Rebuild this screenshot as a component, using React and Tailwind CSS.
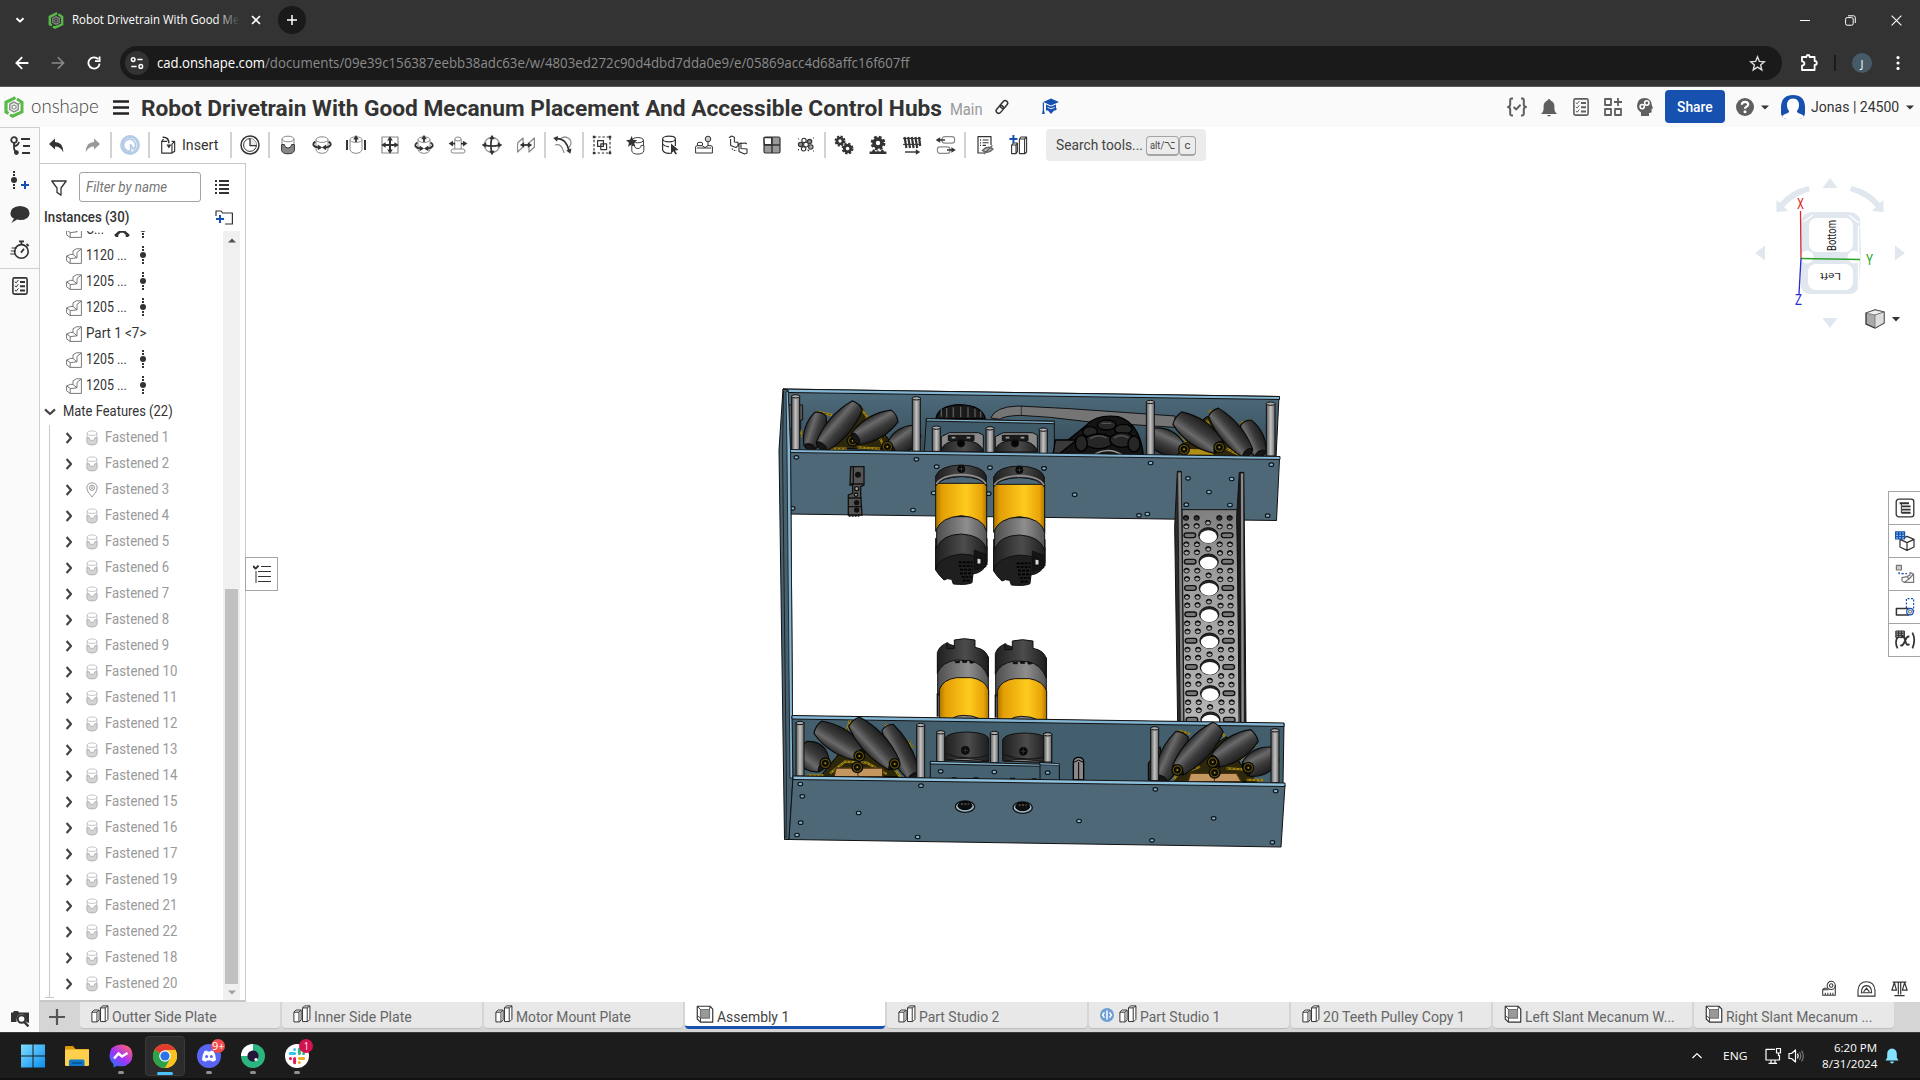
import React, { useLayoutEffect, useRef, useState } from "react";

// Single line of text squeezed or stretched to a given width.
function Fit({ w, className = "", children }) {
  const ref = useRef(null);
  const [s, setS] = useState(1);
  useLayoutEffect(() => {
    const n = ref.current.offsetWidth;
    if (n) setS(w / n);
  }, [w, children]);
  return (
    <span className="block shrink-0" style={{ width: w }}>
      <span ref={ref} className={"inline-block origin-left whitespace-pre align-top " + className} style={{ transform: `scaleX(${s})` }}>
        {children}
      </span>
    </span>
  );
}

function Ic({ size = "size-5", className = "", children, box = "0 0 20 20" }) {
  return (
    <svg viewBox={box} className={`${size} shrink-0 ${className}`} fill="none" stroke="#333" strokeWidth="1.2" strokeLinejoin="round">
      {children}
    </svg>
  );
}

const DARK = "#333";

/* ---------- browser chrome ---------- */

const Hex = ({ size }) => (
  <svg viewBox="0 0 20 22" className={`${size} shrink-0`} fill="none">
    <path d="M11.5 1.6 L2 6.2 V16 L4.6 17.4" stroke="#59b947" strokeWidth="3.2" />
    <path d="M13 3 L18 6.2 V15.8 L8.6 20.2 L6 18.8" stroke="#59b947" strokeWidth="3" />
    <path d="M10 6 L5.8 8.3 V13.6 L10 16 L14.2 13.6 V8.3 Z" stroke="#8b8f8b" strokeWidth="1.5" />
    <path d="M10 9 L8 10.2 V12.2 L10 13.2 L12 12.2 V10 Z M14 8.4 L16 7.2" stroke="#8b8f8b" strokeWidth="1.2" />
  </svg>
);

function Chrome() {
  return (
    <div className="h-[87px] shrink-0 border-b border-[#5c5c5c] bg-[#333333] font-['Open_Sans',sans-serif] text-white">
      <div className="flex h-10 items-center">
        <div className="flex w-10 justify-center">
          <Ic size="size-3" box="0 0 12 12"><path d="M2.5 4.2 L6 7.6 L9.5 4.2" stroke="#fff" strokeWidth="2" /></Ic>
        </div>
        <div className="ml-2 flex w-4 justify-center rounded-sm"><Hex size="h-[17px] w-4" /></div>
        <div className="relative ml-2 w-[168px] overflow-hidden text-[12px] leading-5">
          <Fit w={167}>Robot Drivetrain With Good Me</Fit>
          <div className="absolute inset-y-0 right-0 w-6 bg-linear-to-r from-transparent to-[#333333]" />
        </div>
        <Ic size="size-3" className="ml-[10px]" box="0 0 12 12"><path d="M2 2 L10 10 M10 2 L2 10" stroke="#fff" strokeWidth="1.6" /></Ic>
        <div className="ml-[16px] flex size-7 items-center justify-center rounded-full bg-[#1a1a1a]">
          <Ic size="size-3" box="0 0 12 12"><path d="M6 1 V11 M1 6 H11" stroke="#fff" strokeWidth="1.5" /></Ic>
        </div>
        <div className="flex-1" />
        <div className="flex w-[120px] items-center justify-between pr-[18px]">
          <Ic size="size-[10px]" box="0 0 10 10"><path d="M0 5.5 H10" stroke="#fff" strokeWidth="1" /></Ic>
          <Ic size="size-[11px]" box="0 0 11 11"><rect x="0.6" y="2.6" width="7.6" height="7.6" rx="1.6" stroke="#fff" strokeWidth="1" /><path d="M3 .8 H8.6 Q10.3 .8 10.3 2.6 V8" stroke="#fff" strokeWidth="1" /></Ic>
          <Ic size="size-[11px]" box="0 0 11 11"><path d="M.6 .6 L10.4 10.4 M10.4 .6 L.6 10.4" stroke="#fff" strokeWidth="1.1" /></Ic>
        </div>
      </div>
      <div className="flex h-[46px] items-center">
        <div className="flex w-[120px] items-center gap-[22px] pl-[15px]">
          <Ic size="size-[14px]" box="0 0 14 14"><path d="M13.4 7 H1.6 M7.2 1.2 L1.4 7 L7.2 12.8" stroke="#fff" strokeWidth="1.8" strokeLinejoin="miter" /></Ic>
          <Ic size="size-[14px]" box="0 0 14 14"><path d="M.6 7 H12.4 M6.8 1.2 L12.6 7 L6.8 12.8" stroke="#8a8a8a" strokeWidth="1.6" strokeLinejoin="miter" /></Ic>
          <Ic size="size-[14px]" box="0 0 14 14"><path d="M12.6 7.6 A5.6 5.6 0 1 1 11.2 3.2 M12.6 .6 V5.2 H8" stroke="#fff" strokeWidth="1.8" strokeLinejoin="miter" /></Ic>
        </div>
        <div className="flex h-[34px] w-[1662px] items-center rounded-full bg-[#1a1a1a] pl-[5px] pr-4">
          <div className="flex size-6 items-center justify-center rounded-full bg-[#333333]">
            <Ic size="size-[14px]" box="0 0 14 14"><g stroke="#fff" strokeWidth="1.5"><circle cx="3.2" cy="3.6" r="1.8" /><path d="M7.4 3.6 H12.6 M1.2 10.4 H6.6" /><circle cx="10.8" cy="10.4" r="1.8" /></g></Ic>
          </div>
          <div className="ml-2 flex text-[14px] leading-5">
            <Fit w={108}>cad.onshape.com</Fit>
            <Fit w={644} className="text-[#8b8b8b]">/documents/09e39c156387eebb38adc63e/w/4803ed272c90d4dbd7dda0e9/e/05869acc4d68affc16f607ff</Fit>
          </div>
          <div className="flex-1" />
          <Ic size="size-[17px]" box="0 0 17 17"><path d="M8.5 1.8 L10.4 6.4 L15.4 6.8 L11.6 10 L12.8 14.9 L8.5 12.2 L4.2 14.9 L5.4 10 L1.6 6.8 L6.6 6.4 Z" stroke="#ddd" strokeWidth="1.4" strokeLinejoin="miter" /></Ic>
        </div>
        <Ic size="size-[18px]" className="ml-[18px]" box="0 0 18 18"><path d="M2 3 H6.4 Q6.4 1 8 1 Q9.6 1 9.6 3 H14.6 V7 Q16.8 7 16.8 9 Q16.8 11 14.6 11 V16 H2 V11.6 Q4.4 11.4 4.4 9.5 Q4.4 7.6 2 7.4 Z" stroke="#fff" strokeWidth="1.8" /></Ic>
        <div className="ml-[16px] h-4 w-[2px] bg-[#1c1c1c]" />
        <div className="ml-[16px] flex size-5 items-center justify-center rounded-full bg-[#465b67] text-[11px] leading-none">J</div>
        <Ic size="size-4" className="ml-[18px]" box="0 0 16 16"><g fill="#fff" stroke="none"><circle cx="8" cy="2.6" r="1.6" /><circle cx="8" cy="8" r="1.6" /><circle cx="8" cy="13.4" r="1.6" /></g></Ic>
      </div>
    </div>
  );
}

/* ---------- document header ---------- */

const Caret = ({ className = "" }) => (
  <svg viewBox="0 0 8 5" className={`h-[5px] w-2 shrink-0 ${className}`}><path d="M0 .4 H8 L4 4.6 Z" fill="#333" /></svg>
);

function Header() {
  const g = "#5f5f5f";
  return (
    <div className="flex h-10 shrink-0 items-center bg-[#fafafa] pl-[4px]">
      <Hex size="h-[22px] w-5" />
      <div className="ml-[7px] mt-[-4px] font-['Lato',sans-serif] text-[20px] font-light leading-6 text-[#444]"><Fit w={68}>onshape</Fit></div>
      <Ic size="h-[15px] w-4" className="ml-[14px]" box="0 0 16 15"><path d="M0 1.5 H16 M0 7.5 H16 M0 13.5 H16" stroke="#222" strokeWidth="2.6" /></Ic>
      <div className="ml-[12px] mt-[2px] text-[22.5px] font-bold leading-7 text-[#333]"><Fit w={801}>Robot Drivetrain With Good Mecanum Placement And Accessible Control Hubs</Fit></div>
      <div className="ml-[8px] mt-[6px] text-[16.5px] leading-6 text-[#999]"><Fit w={33}>Main</Fit></div>
      <Ic size="size-4" className="ml-[11px]" box="0 0 16 16"><g strokeWidth="1.5" transform="rotate(-50 8 8)"><rect x=".5" y="5.4" width="8.6" height="5" rx="2.5" /><rect x="6.9" y="5.4" width="8.6" height="5" rx="2.5" /></g></Ic>
      <Ic size="size-[17px]" className="ml-[32px] mt-[-2px]" box="0 0 17 17"><g fill="#1651b0" stroke="none"><path d="M9 .6 L17 4 L9 7.6 L1.2 4 Z" /><path d="M4 6.4 L9 8.6 L14 6.4 V10 L15 11 L13.4 12.4 H12 L9 16 L6 12.4 H4 Z" /><path d="M.8 4.4 H2 V12 L2.8 16 H0 L.8 12 Z" /><path d="M5.600 9.400 L9 10.800 L12.600 9.400" fill="none" stroke="#fafafa" strokeWidth=".9" /></g></Ic>
      <div className="flex-1" />
      <div className="flex items-center">
        <Ic size="size-5" className="mr-[14px]"><path d="M6 1.6 H4.6 Q3.2 1.6 3.2 3 V7.6 Q3.2 9.6 1 10 Q3.2 10.4 3.2 12.4 V17 Q3.2 18.4 4.6 18.4 H6 M14 1.6 H15.4 Q16.8 1.6 16.8 3 V7.6 Q16.8 9.6 19 10 Q16.8 10.4 16.8 12.4 V17 Q16.8 18.4 15.4 18.4 H14" stroke={g} strokeWidth="2" /><path d="M6.6 10 L9.2 12.4 L13.6 7.8" stroke={g} strokeWidth="2" /></Ic>
        <Ic size="h-[19px] w-4" className="mr-[16px]" box="0 0 16 19"><path d="M8 1 Q9.4 1 9.6 2.6 Q13.4 4 13.4 8.4 V11.6 Q13.6 14 16 16 H0 Q2.4 14 2.6 11.6 V8.4 Q2.6 4 6.4 2.6 Q6.6 1 8 1 Z M6 17 H10 Q9.4 18.4 8 18.4 Q6.6 18.4 6 17 Z" fill={g} stroke="none" /></Ic>
        <Ic size="h-[18px] w-4" className="mr-[15px]" box="0 0 16 18"><Checklist c={g} /></Ic>
        <Ic size="size-[18px]" className="mr-[15px]" box="0 0 18 18"><path d="M1 1 H7 V7 H1 Z M1 11 H7 V17 H1 Z M11 11 H17 V17 H11 Z M14 0 V8 M10 4 H18" stroke={g} strokeWidth="1.8" /></Ic>
        <Ic size="h-[18px] w-4" className="mr-[12px]" box="0 0 16 18"><path d="M7.6 0 Q14.6 .4 14.8 7 L16 10.2 L14.6 11 V14.4 L12 15 V18 H4 V14.6 Q0 12 0 7.6 Q.4 .4 7.6 0 Z" fill={g} stroke="none" /><circle cx="9.8" cy="5" r="2.200" stroke="#fff" strokeWidth="1.5" /><circle cx="5.2" cy="8.6" r="2.1" stroke="#fff" strokeWidth="1.5" /></Ic>
      </div>
      <div className="mt-[-1px] flex h-[33px] w-[60px] items-center justify-center rounded bg-[#1651b0] text-[15px] leading-5 text-white"><Fit w={36} className="font-medium">Share</Fit></div>
      <Ic size="size-[18px]" className="ml-[11px]" box="0 0 18 18"><circle cx="9" cy="9" r="9" fill={g} stroke="none" /><path d="M5.8 6.8 Q6 3.8 9 3.8 Q12.2 4 12.2 6.6 Q12.2 8 10.4 8.8 Q9 9.4 9 10.8" stroke="#fff" strokeWidth="2.2" /><circle cx="9" cy="13.8" r="1.5" fill="#fff" stroke="none" /></Ic>
      <Caret className="ml-[7px]" />
      <div className="ml-[12px] size-6 overflow-hidden rounded-md">
        <svg viewBox="0 0 24 24" className="size-6"><path d="M0 24 V11 Q1 0 12 0 Q23 0 24 11 V24 Z" fill="#1651b0" /><path d="M12 3.6 Q18.4 4 18 11 Q17.6 15 15.8 16 Q16 18 19 18.8 Q23 19.6 24 24 H0 Q1 19.6 5 18.8 Q8 18 8.2 16 Q6.4 15 6 11 Q5.6 4 12 3.6 Z" fill="#fff" /></svg>
      </div>
      <div className="ml-[6px] mt-[-1px] text-[15px] leading-5 text-[#333]"><Fit w={88}>Jonas | 24500</Fit></div>
      <Caret className="ml-[7px] mr-[6px]" />
    </div>
  );
}

function Checklist({ c = DARK }) {
  return (
    <g stroke={c} fill="none">
      <rect x=".9" y=".9" width="14.2" height="16.2" rx="1.6" strokeWidth="1.6" />
      <path d="M8 5 H13 M8 9.2 H13 M8 13.4 H13" strokeWidth="2" />
      <path d="M2.8 4.6 L4.2 5.8 L6.4 3 M2.8 8.8 L4.2 10 L6.4 7.2 M2.8 13 L4.2 14.2 L6.4 11.4" strokeWidth="1" />
    </g>
  );
}

/* ---------- toolbar ---------- */

const L = "#8a8a8a";
const Cyl = () => (<g stroke={L} strokeWidth="1"><ellipse cx="10" cy="4.6" rx="6" ry="2.8" fill="#fff" /><path d="M4 4.6 V15 Q5 18.400 10 18.400 Q15 18.400 16 15 V4.6" /></g>);
const Cup = ({ c = "#333", f = "#888", l = L }) => (
  <g strokeWidth="1">
    <ellipse cx="10" cy="4" rx="6" ry="2.8" stroke={l} />
    <path d="M4 4 V10 M16 4 V10" stroke={l} />
    <path d="M3.6 9.6 H6.4 Q6.8 12 8 12.4 Q10 13.6 12 12.4 Q13.2 12 13.6 9.6 H16.4 V15.4 Q15.6 18.8 10 18.8 Q4.4 18.8 3.6 15.4 Z" fill={f} stroke={c} />
  </g>
);
const Tri = ({ x, y, r = 0 }) => <path transform={`translate(${x} ${y}) rotate(${r})`} d="M0 -2.8 L2.8 1.6 H-2.8 Z" fill={DARK} stroke="none" />;
const Gear = ({ x, y, r }) => (
  <g transform={`translate(${x} ${y})`}><circle r={r} strokeWidth={r * 0.9} /><circle r={r * 1.55} strokeWidth={r * 0.6} strokeDasharray={`${r * 0.7} ${r * 0.52}`} /></g>
);
const Boxes = () => (
  <g strokeWidth="1.1">
    <path d="M1 8 L3.400 5.600 H9 V16.6 L7 18.800 H1 Z M1 8 H6.600 L9 5.600 M6.600 8 V18.800" fill="#fff" />
    <path d="M10.600 3.200 L12.800 1 H18.800 V16 L16.400 18.400 H10.600 Z M10.600 3.200 H15.800 L18.800 1 M15.800 3.200 V18" fill="#fff" />
  </g>
);

const icons = {
  undo: <path d="M2 9 L8 3.6 V7 Q16 7 16.4 17.4 Q13.6 11.6 8 11.6 V14.6 Z" fill="#333" stroke="none" />,
  redo: <path d="M18 9 L12 3.6 V7 Q4 7 3.6 17.4 Q6.4 11.6 12 11.6 V14.6 Z" fill="#999" stroke="none" />,
  clock: <g><circle cx="10" cy="10" r="9" strokeWidth="1.5" /><circle cx="10" cy="10" r="6.4" strokeWidth="1" /><path d="M10 3.6 A6.4 6.4 0 0 1 16.4 10 H10 Z" fill="#e6e6e6" stroke="none" /><path d="M10 3.6 V10.6 H16.4" strokeWidth="1.3" /></g>,
  fasten: <Cup />,
  revolute: <g><Cyl /><path d="M3.400 6.600 Q.8 8 1.400 10 Q2.400 12 6 12.400 M16.600 6.600 Q19.200 8 18.600 10 Q17.600 12 14 12.400" strokeWidth="1.8" /><Tri x="7.4" y="12.4" r={90} /><Tri x="12.6" y="12.4" r={-90} /></g>,
  slider: <g><Cyl /><path d="M1 5 V15 M19 5 V15" strokeWidth="2" /><path d="M10 7 V3" strokeWidth="1.8" /><Tri x="10" y="2.8" /></g>,
  planar: <g><rect x="2" y="2" width="16" height="16" stroke={L} /><path d="M10 4 V16 M4 10 H16" strokeWidth="2" /><Tri x="10" y="4" /><Tri x="10" y="16" r={180} /><Tri x="4" y="10" r={-90} /><Tri x="16" y="10" r={90} /></g>,
  cylindrical: <g><Cyl /><path d="M3.400 7.400 Q.8 9 1.400 11 Q2.400 13 6 13.400 M16.600 7.400 Q19.200 9 18.600 11 Q17.600 13 14 13.400 M10 7 V3" strokeWidth="1.8" /><Tri x="10" y="2.6" /><Tri x="7.2" y="13.4" r={90} /><Tri x="12.8" y="13.4" r={-90} /></g>,
  pinslot: <g stroke={L} strokeWidth="1"><ellipse cx="10" cy="4" rx="3.2" ry="2" /><path d="M6.800 4 V14 M13.200 4 V14" /><rect x="3" y="14" width="14" height="4" rx="2" /><path d="M4 8.600 H7 M13 8.600 H16" stroke={DARK} strokeWidth="1.8" /><Tri x="3.4" y="8.6" r={-90} /><Tri x="16.6" y="8.6" r={90} /></g>,
  ball: <g><circle cx="10" cy="10" r="7.6" stroke={L} /><path d="M10 2.400 Q7.600 10 10 17.600 M2.400 10 Q10 12.400 17.600 10" strokeWidth="1.7" /><Tri x="10" y="2.6" /><Tri x="10" y="17.4" r={180} /><Tri x="2.6" y="10" r={-90} /><Tri x="17.4" y="10" r={90} /></g>,
  parallel: <g><path d="M1.600 17 V8 L7 3 V12 Z M13 17 V8 L18.400 3 V12 Z" stroke={L} /><path d="M7 10 H13" strokeWidth="1.8" /><Tri x="6.6" y="10" r={-90} /><Tri x="13.4" y="10" r={90} /></g>,
  tangent: <g><path d="M2 10 Q9 8 11 18 M6.500 4.500 Q12 -.5 17 4.500 Q19.500 8.500 16 12.500" stroke={L} /><path d="M3.600 3.600 Q9 3.600 12 7 Q14.600 10 15.800 15" strokeWidth="1.8" /><Tri x="3" y="3.6" r={-80} /><Tri x="16.4" y="16" r={160} /></g>,
  group: <g><rect x="2" y="2" width="16" height="16" strokeDasharray="2.4 1.8" /><path d="M.8 .8 H3.200 V3.200 H.8 Z M16.800 .8 H19.200 V3.200 H16.800 Z M.8 16.800 H3.200 V19.200 H.8 Z M16.800 16.800 H19.200 V19.200 H16.800 Z" fill="#333" stroke="none" /><path d="M5.600 5.600 H11.400 V11.400 H5.600 Z M8.800 8.800 H14.600 V14.600 H8.800 Z" /></g>,
  mateconn: <g><g transform="translate(2.4 1.4) scale(.94)"><Cup f="#fff" l="#333" /></g><path d="M5.600 1 L7.200 4.800 L11.200 5.200 L8.200 7.800 L9.200 11.800 L5.600 9.600 L2 11.800 L3 7.800 L0 5.200 L4 4.800 Z" fill="#333" stroke="none" /></g>,
  select: <g><ellipse cx="9" cy="4" rx="6.4" ry="2.8" /><path d="M2.600 4 V15 Q4 18.400 9 18.400 Q11 18.400 12 18 M15.400 4 V11 M2.600 9 Q5 12 9 11.600" /><path d="M11 8.600 L18.600 15 L15 15.400 L17 18.800 L15.400 19.600 L13.600 16.200 L11 18.400 Z" fill="#333" stroke="none" /></g>,
  snap: <g strokeWidth="1"><path d="M1.600 12 Q1.600 10.600 4 10.600 H8 L11 12.600 L14 10.600 H16 Q18.400 10.600 18.400 12 V18 H1.600 Z M3 13 H17" /><ellipse cx="6" cy="9" rx="2.8" ry="1.8" fill="#fff" /><circle cx="14" cy="4" r="2.8" fill="#ccc" /><path d="M14 7 V11" /></g>,
  replicate: <g strokeWidth="1.1"><path d="M1 2.800 L3.600 1 L6.400 2.200 V7 L10 7.400 V10.600 L8 12.600 L2.600 10.600 V4 M11.600 8.600 L17.500 8 L18.800 9 M11 9 L13 8 V13.500 L19 14 V18 L16.500 19 L11 16.500 Z" /><path d="M4 13.400 Q5 15.600 8.600 15.600" strokeDasharray="1.600 1" /></g>,
  pattern: <g><rect x="2" y="2" width="16" height="16" rx="1.4" fill="#999" stroke={DARK} /><path d="M2 2.600 H9.600 V9.600 H2.400 Z" fill="#fff" /><path d="M10 2 V18 M2 10 H18" strokeWidth="1.4" /></g>,
  circular: <g strokeWidth="1.1"><circle cx="8" cy="5.4" r="2.2" /><circle cx="13.6" cy="6.6" r="2.2" fill="#888" /><circle cx="4.6" cy="9.4" r="2.2" fill="#888" /><circle cx="14.8" cy="12" r="2.2" fill="#aaa" /><circle cx="7.6" cy="13.8" r="2.2" /><circle cx="10" cy="9.600" r="2.4" fill="#fff" /><path d="M11.600 14.600 L13 16 M2 4 H3 M17 3 H18 M2 14.600 H3 M17 16 H18" /></g>,
  gears: <g><Gear x={6} y={6} r={3} /><Gear x={13.6} y={13.6} r={3.2} /></g>,
  rack: <g><Gear x={10} y={8} r={4} /><path d="M1.600 19 V16.400 H4 L5 14.600 H6.400 L7.400 16.400 H9.200 L10 15 L10.800 16.400 H12.600 L13.600 14.600 H15 L16 16.400 H18.400 V19 Z" fill="#333" stroke="none" /></g>,
  screw: <g><path d="M1 3.400 H19 M1 9.400 H19" strokeWidth="1" /><path d="M2.600 2 L4.400 13 M6.200 2 L8 13 M9.800 2 L11.600 13 M13.400 2 L15.200 13 M17 2 L18.200 11" strokeWidth="2.2" /><path d="M3 17 H14" strokeWidth="1.4" /><Tri x="15.4" y="17" r={90} /></g>,
  linear: <g><rect x="6" y="1.6" width="12.6" height="6.6" rx="2.6" stroke={L} /><rect x="1.4" y="11.8" width="12.6" height="6.6" rx="2.6" stroke={L} /><path d="M3 5 H9 M11 15 H16" strokeWidth="1.7" /><Tri x="2.6" y="5" r={-90} /><Tri x="17" y="15" r={90} /></g>,
  hidelist: <g><path d="M9 18 H3 V1.600 H16 V10" /><path d="M7.600 5 H13.600 M7.600 7.800 H13.600 M7.600 10.400 H11" strokeWidth="1.1" /><path d="M5 5 H6 M5 7.800 H6 M5 10.400 H6" strokeWidth="1.3" /><path d="M7.400 15.400 Q12.600 10 18 14 Q13 19.600 7.400 15.400 Z M9 19 L17.400 10.600" stroke="#666" strokeWidth="1.4" fill="#bbb" /></g>,
  addparts: <g><path d="M3.600 10 L5.400 8 H9.400 V16.600 L8 18.600 H3.600 Z M3.600 10 H8 L9.400 8 M8 10 V18.600 M11.400 4 L13 2 H18.600 V17 L17 18.600 H11.400 Z M11.400 4 H16.600 V18 M16.600 4 L18.600 2" strokeWidth="1.1" /><path d="M5.400 0 V8 M1.400 4 H9.400" stroke="#1651b0" strokeWidth="2" /></g>,
};

const Tool = ({ n, w = "w-[34px]" }) => (
  <div className={`flex ${w} shrink-0 justify-center`}><Ic>{icons[n]}</Ic></div>
);
const Sep = ({ className = "" }) => <div className={`h-[26px] w-[2px] shrink-0 bg-[#d2d2d2] ${className}`} />;

function Toolbar() {
  return (
    <div className="flex h-9 shrink-0 items-center pr-4">
      <Tool n="undo" />
      <Tool n="redo" w="w-9" />
      <Sep />
      <div className="flex w-9 justify-center">
        <Ic><circle cx="10" cy="10" r="8.4" stroke="#b5cce6" strokeWidth="3" /><path d="M8 16 A6 6 0 1 1 13.600 14.600 L10.600 9.800 V16.400 Z" stroke="#b5cce6" strokeWidth="1.8" /></Ic>
      </div>
      <Sep />
      <div className="flex w-20 items-center pl-[9px]">
        <Ic size="size-[18px]" box="0 0 20 20"><path d="M9 6 H3 V19 H14.400 V9 M14 6 H17.400 V17 L14.400 19 M3 6 L5 3.600 M14.400 9 L17.400 6" strokeWidth="1.3" /><path d="M4 1.400 Q11 1 11 8" strokeWidth="1.8" /><Tri x="11" y="11" r={180} /></Ic>
        <div className="ml-[5px] text-[15px] leading-5 text-[#333]"><Fit w={36}>Insert</Fit></div>
      </div>
      <Sep />
      <Tool n="clock" w="w-9" />
      <Sep className="mr-px" />
      {["fasten", "revolute", "slider", "planar", "cylindrical", "pinslot", "ball", "parallel"].map((n) => <Tool key={n} n={n} />)}
      <Sep className="ml-px" />
      <Tool n="tangent" />
      <Sep className="ml-[2px] mr-px" />
      {["group", "mateconn", "select", "snap", "replicate", "pattern", "circular"].map((n) => <Tool key={n} n={n} />)}
      <Sep className="mx-px" />
      {["gears", "rack", "screw", "linear"].map((n) => <Tool key={n} n={n} />)}
      <Sep className="ml-px mr-[2px]" />
      <Tool n="hidelist" />
      <Tool n="addparts" w="w-[32px]" />
      <div className="ml-[12px] flex h-8 w-40 items-center rounded bg-[#ececec] pl-[10px] text-[15px] text-[#444]">
        <Fit w={87}>Search tools...</Fit>
        <div className="ml-[3px] mt-[2px] flex h-[20px] w-[33px] items-center justify-center rounded-sm border border-b-2 border-[#a5a5a5] text-[11.5px]"><Fit w={26}>alt/⌥</Fit></div>
        <div className="mt-[2px] flex h-[20px] w-[17px] items-center justify-center rounded-sm border border-b-2 border-[#a5a5a5] text-[11.5px]">c</div>
      </div>
    </div>
  );
}

/* ---------- left rail and instance panel ---------- */

const Dots = () => (
  <svg viewBox="0 0 6 18" className="h-[18px] w-[6px] shrink-0" fill="#333"><path d="M2 0 H4 V2 H2 Z M2 3 H4 V5 H2 Z M2 13 H4 V15 H2 Z M2 16 H4 V18 H2 Z" /><circle cx="3" cy="9" r="3" /></svg>
);

function Rail() {
  return (
    <div className="flex w-10 shrink-0 flex-col items-center border-r border-t border-[#cfcfcf] bg-[#fafafa]">
      <Ic size="size-5" className="mt-[8px]"><circle cx="4" cy="4" r="2.8" strokeWidth="1.8" /><path d="M4 7 V11 Q4 16 8 16.600 M4 10 Q8 10 9 6" strokeWidth="1.8" /><circle cx="6.4" cy="16.6" r="1.8" fill="#333" /><path d="M11 3 H20 M13 10 H20 M12 17 H20" strokeWidth="2.2" /></Ic>
      <div className="ml-[1px] mt-[15px] flex h-[20px] w-[18px]">
        <Dots />
        <Ic size="size-2" className="ml-[4px] mt-[10px]" box="0 0 8 8"><path d="M4 0 V8 M0 4 H8" stroke="#1651b0" strokeWidth="2" /></Ic>
      </div>
      <Ic size="h-[18px] w-5" className="mt-[15px]" box="0 0 20 18"><path d="M10 0 Q19.600 .6 19.600 7.400 Q19 14 10 14 Q8.400 14 7 13.600 L1.400 17 L4 12.600 Q.4 10.800 .4 7.400 Q.6 .6 10 0 Z" fill="#333" stroke="none" /></Ic>
      <Ic size="size-5" className="mt-[16px]"><circle cx="11.4" cy="11.4" r="6.8" strokeWidth="1.6" /><path d="M9 1.400 H14 M11.400 1.400 V4 M16.600 4 L18.600 6 M11 12.600 L14 8.800" strokeWidth="1.8" /><path d="M1.600 8 H7 M.8 11 H6 M.2 14 H5" strokeWidth="1.2" stroke="#333" /></Ic>
      <div className="mt-[8px] h-px w-full bg-[#cfcfcf]" />
      <Ic size="h-[18px] w-4" className="mt-[8px]" box="0 0 16 18"><Checklist /></Ic>
      <div className="flex-1" />
      <Ic size="size-[18px]" className="mb-[5px] ml-px" box="0 0 18 18"><path d="M0 3.400 H2 L3 2 H7 L8 3.400 H18 V14 L15 13 Q16 5.600 10.400 5 Q5 5.600 5.600 13 H0 Z" fill="#333" stroke="none" /><circle cx="10.6" cy="10" r="3.8" strokeWidth="2" stroke="#333" /><path d="M13.400 13.200 L17.400 17.400" strokeWidth="2.4" /></Ic>
    </div>
  );
}

const PartIcon = () => (
  <Ic size="size-4" box="0 0 16 16"><path d="M.6 8 L4.400 6.400 H7 V2.800 L10.400 .8 H15.400 V15.400 H4 L.6 12.800 Z M15.400 1 L11 4.400 V9.800 L4.400 10.600 L.6 8 M4.200 10.600 V15.400 M7 6.400 L11 9.800" stroke="#6a6a6a" strokeWidth=".9" /></Ic>
);

const instances = [
  { t: "1120 ...", w: 41, d: true },
  { t: "1205 ...", w: 41, d: true },
  { t: "1205 ...", w: 41, d: true },
  { t: "Part 1 <7>", w: 60 },
  { t: "1205 ...", w: 41, d: true },
  { t: "1205 ...", w: 41, d: true },
];
const mates = [1, 2, 3, 4, 5, 6, 7, 8, 9, 10, 11, 12, 13, 14, 15, 16, 17, 19, 21, 22, 18, 20];

function Panel() {
  return (
    <div className="flex h-[839px] w-[206px] shrink-0 flex-col border-b-2 border-r border-t border-[#c8c8c8] bg-white text-[#333]">
      <div className="flex h-[38px] items-end pl-[11px]">
        <Ic size="size-4" className="mb-[6px]" box="0 0 16 16"><path d="M.8 1 H15.200 L10 8 V15.200 L6 12.400 V8 Z" strokeWidth="1.3" /></Ic>
        <div className="ml-[12px] flex h-[30px] w-[122px] items-center rounded-[3px] border border-[#a3a3a3] pl-[6px] text-[14px] italic text-[#777]"><Fit w={81}>Filter by name</Fit></div>
        <Ic size="size-[14px]" className="mb-[8px] ml-[14px]" box="0 0 14 14"><path d="M0 1 H2 M4 1 H14 M0 5 H2 M4 5 H14 M0 9 H2 M4 9 H14 M0 13 H2 M4 13 H14" strokeWidth="2" /></Ic>
      </div>
      <div className="flex h-[29px] items-center pl-[4px] pt-[3px]">
        <div className="text-[14.5px] font-medium leading-5"><Fit w={85}>Instances (30)</Fit></div>
        <Ic size="h-[15px] w-[18px]" className="ml-[86px] mt-[-2px]" box="0 0 18 15"><path d="M1 6 V1 H6 L7.600 3 H17.400 V14 H10" strokeWidth="1.2" /><path d="M5 5 V13 M1 9 H9" stroke="#1651b0" strokeWidth="2" /></Ic>
      </div>
      <div className="flex h-[769px] pl-[2px]">
        <div className="w-[181px] overflow-hidden text-[14.5px]">
          <div className="mt-[-14px] flex h-[26px] items-center pl-6">
            <PartIcon /><span className="ml-1"><Fit w={18}>C...</Fit></span>
            <Ic size="size-4" className="ml-[10px]" box="0 0 16 16"><path d="M1 14 L6 9.500 H10 L15 14 M3 15 V11 M13 15 V11" strokeWidth="2.6" /></Ic>
            <span className="ml-[10px] mt-[-2px]"><Dots /></span>
          </div>
          {instances.map((r, i) => (
            <div key={i} className="flex h-[26px] items-center pl-6">
              <PartIcon />
              <span className="ml-1"><Fit w={r.w}>{r.t}</Fit></span>
              {r.d && <span className="ml-[13px] mt-[-2px]"><Dots /></span>}
            </div>
          ))}
          <div className="flex h-[26px] items-center pl-[2px]">
            <Ic size="h-2 w-3" box="0 0 12 8"><path d="M1 1.400 L6 6 L11 1.400" strokeWidth="2.2" stroke="#444" /></Ic>
            <span className="ml-[7px]"><Fit w={110}>Mate Features (22)</Fit></span>
          </div>
          <div className="ml-[7px] border-l border-[#c8c8c8]">
            {mates.map((m) => (
              <div key={m} className="flex h-[26px] items-center pl-[15px] text-[#999]">
                <Ic size="h-3 w-2" box="0 0 8 12"><path d="M1.600 1 L6 6 L1.600 11" strokeWidth="2.2" stroke="#444" /></Ic>
                <span className="ml-[11px] flex w-4 justify-center">
                  {m === 3 ? (
                    <Ic size="size-4" box="0 0 16 16"><path d="M8 15 Q2.800 9.600 2.800 6 Q3 1 8 .8 Q13 1 13.200 6 Q13.200 9.600 8 15 Z" stroke="#999" strokeWidth="1" /><circle cx="8" cy="5.8" r="2.6" stroke="#999" strokeWidth="1" /><circle cx="8" cy="5.8" r="1" stroke="#999" strokeWidth=".8" /></Ic>
                  ) : (
                    <Ic size="size-4" className="mt-[-1px]" box="0 0 20 20"><Cup c="#a6a6a6" f="#d4d4d4" l="#b8b8b8" /></Ic>
                  )}
                </span>
                <span className="ml-[5px]"><Fit w={m < 10 ? 64 : 72}>{"Fastened " + m}</Fit></span>
              </div>
            ))}
          </div>
          <div className="ml-[3px] h-px w-[9px] bg-[#c8c8c8]" />
        </div>
        <div className="flex w-[17px] flex-col items-center bg-[#f0f0f0]">
          <svg viewBox="0 0 8 5" className="mt-[7px] h-[5px] w-2 shrink-0"><path d="M0 4.600 H8 L4 .4 Z" fill="#505050" /></svg>
          <div className="mt-[346px] h-[395px] w-[13px] shrink-0 bg-[#c1c1c1]" />
          <svg viewBox="0 0 8 5" className="mt-[6px] h-[5px] w-2 shrink-0"><path d="M0 .4 H8 L4 4.600 Z" fill="#a0a0a0" /></svg>
        </div>
      </div>
    </div>
  );
}

/* ---------- 3D viewport ---------- */

const K = "#111";
const Post = ({ x, y, h, w = 24 }) => (
  <g><rect x={x} y={y} width={w} height={h} fill="url(#post)" stroke={K} strokeWidth="3" /><ellipse cx={x + w / 2} cy={y + 1} rx={w / 2} ry="5" fill="#aaa" stroke={K} strokeWidth="3" /></g>
);
const Bolt = ({ x, y, r = 7 }) => <ellipse cx={x} cy={y} rx={r} ry={r * 0.75} fill="#7fb3d3" stroke={K} strokeWidth="3.4" />;
const Roller = ({ x, y, a, l = 85, t = 28 }) => (
  <g transform={`translate(${x} ${y}) rotate(${a})`}>
    <path d={`M${-l} ${-t * 0.6} Q0 ${-t * 1.45} ${l} ${-t * 0.6} Q${l + 9} 0 ${l} ${t * 0.6} Q0 ${t * 1.45} ${-l} ${t * 0.6} Q${-l - 9} 0 ${-l} ${-t * 0.6} Z`} fill="url(#rub)" stroke="#0a0a0a" strokeWidth="3.4" />
    <ellipse cx={-l + 1} cy="0" rx="9" ry={t * 0.55} fill="#161616" stroke="#000" strokeWidth="2" />
  </g>
);
const Hub = ({ x, y }) => (<g><circle cx={x} cy={y} r="16" fill="#5e4e0b" stroke="#0a0a0a" strokeWidth="4" /><circle cx={x} cy={y} r="9" fill="#15130a" stroke="#000" strokeWidth="3" /><circle cx={x} cy={y} r="3" fill="#a58b12" /></g>);
// Dark wheel rim with a few bright bracket edges.
const Rim = ({ d, lines }) => (<g><path d={d} fill="#2d270c" stroke="#000" strokeWidth="3" /><path d={lines} stroke="#a98a10" strokeWidth="7" /><path d={lines} stroke="#1c1804" strokeWidth="2" strokeDasharray="7 5" /></g>);

const MotorTop = ({ dx = 0, dy = 0 }) => (
  <g transform={`translate(${dx} ${dy})`} stroke={K} strokeWidth="3">
    <path d="M497 505 V600 Q505 614 522 630 L532 626 L545 628 L550 642 Q590 646 606 638 L609 612 Q645 606 651 575 V505 Z" fill="#1f1f1f" />
    <path d="M497 530 V598 Q505 560 574 552 Q636 554 651 585 V530 Q640 494 574 490 Q508 494 497 530 Z" fill="url(#blk)" />
    <path d="M500 535 V440 H650 V540 Q640 496 574 492 Q514 494 500 535 Z" fill="url(#gry)" />
    <path d="M497 484 V340 H650 V484 Q640 442 574 437 Q510 442 497 484 Z" fill="url(#yel)" />
    <path d="M497 348 V318 Q510 286 574 285 Q640 288 649 318 V348 Q636 322 574 320 Q512 322 497 348 Z" fill="url(#blk)" />
    <path d="M499 342 Q514 316 574 314 Q634 316 648 342" fill="none" stroke="#8e8e8e" strokeWidth="5" />
    <circle cx="574" cy="297" r="11" fill="#000" /><path d="M566 297 H582 M574 289 V305" stroke="#555" strokeWidth="2" />
    <path d="M613 540 L648 554 V590 L613 600 Z" fill="#151515" /><path d="M620 562 L634 566 V582 L620 584 Z" fill="#ddd" strokeWidth="5" />
    <path d="M566 577 H608 M566 588 H608 M570 599 H608 M570 610 H608 M575 621 H606 M578 632 H600" stroke="#000" strokeWidth="5" strokeDasharray="9 3" />
  </g>
);
const MotorBottom = ({ dx = 0, dy = 0 }) => (
  <g transform={`translate(${dx} ${dy})`} stroke={K} strokeWidth="3">
    <path d="M503 225 V110 H655 V225 Z" fill="url(#gry)" />
    <path d="M502 160 V98 Q508 76 534 68 V84 H553 V60 Q582 52 615 60 V82 Q650 88 655 115 V172 Q640 130 600 122 L560 120 Q515 126 502 160 Z" fill="url(#blk)" />
    <path d="M530 68 V86 H552 V76" fill="#222" />
    <path d="M556 122 V128 H568 V122 M578 120 V127 H590 V120 M600 122 V129 H610 V124" fill="#111" />
    <path d="M508 296 V208 Q520 178 560 173 H605 Q645 180 656 210 V296 Z" fill="url(#yel)" />
    <path d="M503 220 V290" strokeWidth="6" />
    <path d="M545 296 Q560 286 580 286 Q610 286 628 296 Z" fill="#888" />
  </g>
);
const Knob = ({ dx = 0, dy = 0 }) => (
  <g transform={`translate(${dx} ${dy})`} stroke={K} strokeWidth="3">
    <path d="M524 420 V355 Q534 337 590 336 Q648 337 656 355 V424 Z" fill="url(#blk)" />
    <path d="M526 400 Q560 416 600 414 Q640 414 656 402" fill="none" />
    <path d="M530 420 Q590 410 655 424 Z" fill="#999" />
    <circle cx="586" cy="391" r="12" fill="#080808" /><path d="M578 391 H594 M586 383 V399" stroke="#444" strokeWidth="2" />
  </g>
);
const Eye = ({ x, y }) => (
  <g><ellipse cx={x} cy={y} rx="29" ry="17" fill="#9cb9c8" stroke={K} strokeWidth="4" /><ellipse cx={x} cy={y - 3} rx="21" ry="12" fill="#0c0e0f" stroke="#000" strokeWidth="3" /><path d={`M${x - 12} ${y - 8} H${x + 12}`} stroke="#555" strokeWidth="4" strokeDasharray="6 4" /></g>
);

function Channel() {
  const rows = [0, 1, 2, 3, 4, 5, 6, 7];
  return (
    <g stroke={K} strokeWidth="3">
      <path d="M426 419 H592 L597 1060 H432 Z" fill="url(#chan)" />
      {rows.map((i) => {
        const y = 497 + i * 79;
        const x = i * 0.9;
        return (
          <g key={i}>
            <ellipse cx={505 + x} cy={y - 1} rx="29" ry="23" fill="#222" />
            <ellipse cx={505 + x} cy={y + 3} rx="26" ry="19" fill="#fff" stroke="none" />
            <rect x={432 + x} y={y - 8} width="35" height="14" rx="7" fill="#777" strokeWidth="4" />
            <rect x={544 + x} y={y - 8} width="35" height="14" rx="7" fill="#777" strokeWidth="4" />
            {[[438, -53], [470, -53], [538, -53], [569, -53], [504, -39], [439, -28], [470, -29], [539, -27], [569, -27]].map(([px, py], j) => (
              <g key={j}>
                <ellipse cx={px + x} cy={y + py} rx="8" ry="7" fill={i === 0 && j < 4 ? "#333" : "#aaa"} strokeWidth="3" />
                <path d={`M${px + x - 7} ${y + py - 2} Q${px + x} ${y + py - 10} ${px + x + 7} ${y + py - 2}`} strokeWidth="5" fill="none" />
              </g>
            ))}
          </g>
        );
      })}
      <path d="M412 304 H424 L429 1060 H413 L404 470 Z" fill="#2b2b2b" />
      <path d="M413 306 H424 L431 1060 H421 Z" fill="#858585" strokeWidth="2.5" />
      <path d="M598 307 H611 L614 560 L618 1060 H600 L590 440 Z" fill="#1b1b1b" />
      <path d="M601 309 H611 L613 1060 H603 Z" fill="#8c8c8c" strokeWidth="2.5" />
    </g>
  );
}

function Model() {
  return (
    <svg viewBox="770 380 530 480" className="h-[480px] w-[530px]" fill="none">
      <defs>
        <linearGradient id="post"><stop offset="0" stopColor="#555" /><stop offset=".5" stopColor="#c4c4c4" /><stop offset="1" stopColor="#666" /></linearGradient>
        <linearGradient id="rub" x1="0" y1="0" x2="0" y2="1"><stop offset="0" stopColor="#2a2a2a" /><stop offset=".3" stopColor="#6a6a6a" /><stop offset=".6" stopColor="#3c3c3c" /><stop offset="1" stopColor="#1d1d1d" /></linearGradient>
        <linearGradient id="yel"><stop offset="0" stopColor="#a87400" /><stop offset=".12" stopColor="#e39e04" /><stop offset=".6" stopColor="#ffcb1f" /><stop offset=".9" stopColor="#e8a408" /><stop offset="1" stopColor="#a87400" /></linearGradient>
        <linearGradient id="gry"><stop offset="0" stopColor="#4e4e4e" /><stop offset=".6" stopColor="#8e8e8e" /><stop offset="1" stopColor="#555" /></linearGradient>
        <linearGradient id="blk"><stop offset="0" stopColor="#1f1f1f" /><stop offset=".55" stopColor="#4c4c4c" /><stop offset="1" stopColor="#1d1d1d" /></linearGradient>
        <linearGradient id="chan" x1="0" y1="0" x2="0" y2="1"><stop offset="0" stopColor="#808080" /><stop offset=".3" stopColor="#9d9d9d" /><stop offset="1" stopColor="#b5b5b5" /></linearGradient>
        <linearGradient id="back" x1="0" y1="0" x2="0" y2="1"><stop offset="0" stopColor="#4f6d7e" /><stop offset="1" stopColor="#344a56" /></linearGradient>
      </defs>

      {/* upper housing, inside */}
      <path d="M783 389 L1279 396.5 L1276 458 L790 452 Z" fill="url(#back)" stroke={K} />
      <path d="M783 389 L1279.5 396.5 L1279.5 399.5 L788 392.5 Z" fill="#83b4d2" stroke={K} />
      <g transform="translate(770 370) scale(.33333)">
        <path d="M55 105 H98 V150 H92 V178 H55 Z" fill="#555" stroke={K} strokeWidth="3" />
        <Rim d="M150 235 L200 150 L270 105 L300 150 L350 200 L375 238 Z" lines="M140 125 L186 135 M262 102 L292 140 L288 155 M150 236 H230 M262 232 L330 236 M330 205 L345 236 M92 180 V200" />
        <path d="M498 145 Q506 106 570 104 Q636 106 646 146 Z" fill="#1a1a1a" stroke="#000" strokeWidth="4" />
        <path d="M514 140 V118 M530 142 V114 M550 142 V112 M572 142 V110 M594 142 V112 M615 142 V116 M632 142 V124" stroke="#5a5a5a" strokeWidth="4" />
        <path d="M662 144 Q676 110 744 108 L900 116 L1215 138 V172 L960 156 L840 142 L750 136 Q700 138 690 148 Z" fill="#757575" stroke={K} strokeWidth="3" />
        <path d="M754 108 V136" stroke={K} strokeWidth="2" />
        <Roller x={135} y={182} a={-72} l={52} t={30} />
        <Roller x={402} y={210} a={-35} l={48} t={34} />
        <Roller x={208} y={168} a={-49} l={82} t={34} />
        <Hub x={248} y={212} /><Hub x={352} y={230} />
        <Roller x={315} y={172} a={-30} l={68} t={34} />
        <Post x={65} y={78} h={162} /><Post x={427} y={84} h={160} />
        {/* gearbox bracket */}
        <path d="M469 146 L853 154 V258 H462 Z" fill="#3f5a69" stroke={K} strokeWidth="3" />
        <path d="M469 146 L853 154 V161 L469 153 Z" fill="#83b4d2" stroke={K} strokeWidth="3" />
        {[0, 162].map((d) => (
          <g key={d} stroke={K} strokeWidth="3">
            <path d={`M${514 + d} 245 V200 L${538 + d} 188 H${625 + d} L${640 + d} 195 V245 Z`} fill="#8a8a8a" />
            <path d={`M${512 + d} 246 Q${516 + d} 212 ${574 + d} 210 Q${634 + d} 212 ${641 + d} 246 Z`} fill="url(#blk)" />
            <path d={`M${535 + d} 196 H${612 + d} V212 H${535 + d} Z`} fill="#1a1a1a" />
            <path d={`M${545 + d} 203 H${556 + d} M${590 + d} 203 H${601 + d}`} stroke="#999" strokeWidth="5" />
            <circle cx={573 + d} cy={220} r="11" fill="#050505" />
          </g>
        ))}
        <Post x={487} y={172} h={72} /><Post x={648} y={174} h={74} /><Post x={808} y={178} h={74} />
      </g>
      <g transform="translate(1040 370) scale(.33333)">
        <path d="M40 246 L140 165 Q170 132 235 140 Q300 160 310 255 H40 Z" fill="#141414" stroke="#000" strokeWidth="4" />
        <path d="M46 210 H110 L60 250 H40 Z" fill="#3a3a3a" stroke="#000" strokeWidth="4" />
        <g fill="#262626" stroke="#000" strokeWidth="4">
          <ellipse cx="200" cy="165" rx="28" ry="15" /><ellipse cx="150" cy="185" rx="22" ry="15" /><ellipse cx="250" cy="178" rx="26" ry="15" />
          <ellipse cx="176" cy="214" rx="42" ry="22" /><ellipse cx="246" cy="210" rx="36" ry="22" /><ellipse cx="282" cy="222" rx="18" ry="24" /><ellipse cx="124" cy="220" rx="18" ry="24" />
        </g>
        <path d="M150 206 Q174 190 200 204 M222 204 Q244 190 266 204 M185 160 H214" stroke="#555" strokeWidth="4" />
        <path d="M165 252 Q205 230 245 254" stroke="#999" strokeWidth="5" />
        <Rim d="M430 258 L440 190 L500 140 L560 150 L600 240 V258 Z" lines="M505 122 L530 130 M500 150 L520 190 M600 160 L635 150 M445 240 L520 250 M560 236 L600 256 M420 190 L440 215" />
        <path d="M446 238 H520 V254 H440 Z" fill="#b08f12" />
        <Roller x={375} y={215} a={25} l={50} t={36} />
        <Hub x={432} y={238} />
        <Roller x={640} y={205} a={245} l={52} t={30} />
        <Roller x={474} y={188} a={215} l={76} t={38} />
        <Roller x={572} y={188} a={230} l={80} t={32} />
        <Hub x={538} y={232} />
        <Post x={319} y={95} h={162} /><Post x={679} y={100} h={158} w={26} />
      </g>

      {/* upper front plate */}
      <path d="M789 452 L1279.5 459 L1276.5 520.5 L789 514 Z" fill="#4f6878" stroke={K} />
      <path d="M789 449.5 L1280 456.5 V459.5 L789 452.5 Z" fill="#83b4d2" stroke={K} strokeWidth=".9" />
      <g transform="translate(770 370) scale(.33333)">
        {[[79, 262], [439, 268], [68, 415], [429, 420], [500, 290], [660, 293], [822, 295], [491, 369], [656, 371]].map(([x, y]) => <Bolt key={x + "" + y} x={x} y={y} />)}
        <g stroke={K} strokeWidth="4">
          <path d="M242 290 H282 V345 L272 350 V375 L276 435 H235 V375 L248 370 V345 H240 Z" fill="#555" />
          <path d="M236 384 H274 M240 342 H280 M236 410 H274 M250 290 V345" />
          <circle cx="264" cy="314" r="7" fill="#111" /><circle cx="260" cy="356" r="6" fill="#aaa" /><circle cx="258" cy="374" r="5" fill="#aaa" /><circle cx="260" cy="398" r="6" fill="#111" /><circle cx="260" cy="420" r="6" fill="#111" />
          <path d="M236 437 H268" strokeWidth="6" strokeDasharray="6 3" />
        </g>
        <MotorTop /><MotorTop dx={174} dy={3} />
      </g>
      <g transform="translate(1040 370) scale(.33333)">
        {[[12, 295], [104, 374], [332, 279], [694, 284], [683, 437], [297, 436], [322, 432], [444, 325], [575, 327], [507, 366], [439, 404], [570, 405]].map(([x, y]) => <Bolt key={x + "" + y} x={x} y={y} />)}
        <Channel />
      </g>

      {/* long left plate */}
      <path d="M783 389 L779 450 L784.5 839.5 L789 839.5 L793 778 L790.5 450 L788 390 Z" fill="#47616f" stroke={K} />
      <path d="M786 392 L788.2 391 L790.5 450 L793 778 L790 778 L787 450 Z" fill="#83b4d2" stroke={K} strokeWidth=".8" />
      <path d="M783.5 391 L782.5 450 L786.5 790 L786 838" stroke={K} strokeWidth=".8" />

      {/* lower housing */}
      <g transform="translate(770 620) scale(.33333)"><MotorBottom /><MotorBottom dx={174} dy={3} /></g>
      <path d="M792 716 L1284 723.5 L1283 785 L793 778 Z" fill="#435e6d" stroke={K} />
      <path d="M792 715.5 L1284 723 V726.5 L792 719 Z" fill="#83b4d2" stroke={K} />
      <g transform="translate(770 620) scale(.33333)">
        <Rim d="M150 470 L200 410 L230 350 L290 380 L390 470 Z" lines="M240 300 L228 345 M345 312 L362 330 M180 460 L225 425 L290 428 L350 462 M112 466 H160 M418 362 V380 H432 M375 450 L390 470" />
        <path d="M198 444 H338 V470 H192 Z" fill="#c49660" stroke="#4a3210" strokeWidth="4" /><path d="M264 442 V470" stroke="#4a3210" strokeWidth="3" />
        <Roller x={128} y={410} a={218} l={42} t={42} />
        <Hub x={166} y={430} />
        <Roller x={392} y={396} a={242} l={84} t={32} />
        <Roller x={208} y={362} a={212} l={76} t={37} />
        <Hub x={268} y={408} /><Hub x={262} y={442} />
        <Roller x={312} y={370} a={227} l={88} t={36} />
        <Hub x={374} y={432} />
        <Post x={78} y={308} h={160} /><Post x={440} y={314} h={160} />
        <Knob /><Knob dx={174} dy={3} />
        <Post x={500} y={336} h={90} /><Post x={661} y={338} h={90} /><Post x={821} y={342} h={90} />
        <path d="M481 426 L868 436 V490 H481 Z" fill="#466170" stroke={K} strokeWidth="3" />
        <path d="M481 424 L868 434 V440 L481 432 Z" fill="#83b4d2" stroke={K} strokeWidth="3" />
        <Bolt x={512} y={454} /><Bolt x={673} y={456} /><Bolt x={833} y={459} />
        <path d="M545 474 H560 M610 474 H626 M720 476 H735 M785 477 H800" stroke={K} strokeWidth="5" />
      </g>
      <g transform="translate(1040 700) scale(.33333)">
        <path d="M100 238 V185 Q102 172 116 172 Q130 172 131 185 V240 Z" fill="#888" stroke="#000" strokeWidth="4" /><path d="M116 186 V238 M100 188 L116 180 L131 188" stroke="#000" strokeWidth="3" />
        <path d="M325 240 V190 L360 140 L380 240 Z" fill="#2a2a2a" stroke="#000" strokeWidth="3" />
        <Rim d="M400 245 L470 170 L560 110 L600 190 L650 245 Z" lines="M415 92 L450 102 M530 78 L555 110 M440 215 L480 200 M560 205 L610 208 M400 240 L415 222 M620 240 H670 M600 180 L650 130" />
        <path d="M452 220 H590 L604 245 H444 Z" fill="#c49660" stroke="#4a3210" strokeWidth="4" /><path d="M523 218 V245" stroke="#4a3210" strokeWidth="3" />
        <Roller x={395} y={170} a={-65} l={74} t={34} />
        <Roller x={662} y={185} a={-28} l={50} t={38} />
        <Roller x={474} y={146} a={-47} l={88} t={36} />
        <Hub x={412} y={210} /><Hub x={524} y={218} />
        <Roller x={584} y={145} a={-33} l={70} t={36} />
        <Hub x={518} y={186} /><Hub x={625} y={203} />
        <Post x={11} y={102} h={84} /><Post x={332} y={84} h={158} /><Post x={693} y={90} h={158} />
        <path d="M0 188 L58 191 V245 H0 Z" fill="#466170" stroke={K} strokeWidth="3" /><path d="M0 188 L58 191 V197 L0 194 Z" fill="#83b4d2" stroke={K} strokeWidth="2" />
        <Bolt x={23} y={218} />
      </g>
      <path d="M793 777 L1285 785 L1281 847 L789 839.5 Z" fill="#4f6878" stroke={K} />
      <path d="M793 776 L1285 783 V786.5 L793 779.5 Z" fill="#8fc0dc" stroke={K} />
      <g transform="translate(770 620) scale(.33333)">
        {[[91, 492], [97, 529], [92, 608], [81, 645], [266, 579], [453, 497], [443, 651]].map(([x, y]) => <Bolt key={x + "" + y} x={x} y={y} />)}
        <Eye x={585} y={560} /><Eye x={758} y={563} />
      </g>
      <g transform="translate(1040 700) scale(.33333)">
        {[[346, 268], [707, 273], [117, 363], [521, 355], [336, 421], [697, 427]].map(([x, y]) => <Bolt key={x + "" + y} x={x} y={y} />)}
      </g>
    </svg>
  );
}

function ViewCube() {
  const p = "#e0e7ee";
  return (
    <svg viewBox="1750 170 170 170" className="size-[170px] font-['Roboto',sans-serif]" fill="none">
      <g fill={p}>
        <path d="M1830 178 L1837.5 188 H1822.5 Z M1830 328 L1837.5 318 H1822.5 Z M1755 253 L1765 245.5 V260.5 Z M1905 253 L1895 245.5 V260.5 Z" />
        <path d="M1776.5 212 L1776.5 200 L1780 203 Q1790 190 1808.5 186 L1810 191 Q1794 196 1784 207 L1788 211 Z" />
        <path d="M1883.5 212 L1883.5 200 L1880 203 Q1869 190 1851.5 186 L1850 191 Q1866 196 1876 207 L1872 211 Z" />
        <path d="M1801 222 Q1803 212 1812 212 H1848 Q1857 212 1860 219 L1861 256 L1859 286 Q1857 293 1850 294 H1810 Q1803 294 1801 287 Z" />
      </g>
      <rect x="1809" y="218" width="44" height="34" rx="8" fill="#fff" />
      <rect x="1808" y="264" width="45" height="26" rx="8" fill="#fff" />
      <circle cx="1807" cy="257" r="6.5" fill="#fff" /><circle cx="1854" cy="257" r="6.5" fill="#fff" />
      <path d="M1803 222 L1813 215 M1849 215 L1859 223 M1858.5 226 V290" stroke="#fff" strokeWidth="1.5" />
      <path d="M1800.5 211 L1801 258" stroke="#d92b2b" strokeWidth="1.3" />
      <path d="M1801 258.5 L1860 259.5" stroke="#2aa52a" strokeWidth="1.3" />
      <path d="M1801 258 L1799 294" stroke="#2b2bd0" strokeWidth="1.3" />
      <text x="1797" y="208.500" fontSize="14" textLength="7" lengthAdjust="spacingAndGlyphs" fill="#d92b2b">X</text>
      <text x="1866" y="264.500" fontSize="14" textLength="7" lengthAdjust="spacingAndGlyphs" fill="#2aa52a">Y</text>
      <text x="1795" y="305" fontSize="14" textLength="7" lengthAdjust="spacingAndGlyphs" fill="#2b2bd0">Z</text>
      <text transform="translate(1836 251) rotate(-90)" fontSize="12.500" textLength="31" lengthAdjust="spacingAndGlyphs" fill="#222">Bottom</text>
      <text transform="translate(1841 273) rotate(180)" fontSize="9" textLength="21" lengthAdjust="spacingAndGlyphs" fill="#333">Left</text>
      <path d="M1866 313 L1875 310 L1884 312 V323 L1875 328 L1866 324 Z" fill="#aaa" stroke="#333" strokeWidth="1.3" />
      <path d="M1866 313 L1875 315 L1884 312 L1875 310 Z" fill="#eee" stroke="#555" strokeWidth=".6" /><path d="M1875 315 L1884 312 V323 L1875 328 Z" fill="#ddd" stroke="#555" strokeWidth=".6" />
      <path d="M1892 317 H1900 L1896 321.5 Z" fill="#333" />
    </svg>
  );
}

const sideIcons = [
  <g key="a"><rect x="1.2" y="1.2" width="17.6" height="17.6" rx="2.6" strokeWidth="1.3" /><path d="M4.600 5.200 H14 M7 8.400 H15.600 M7 11.600 H15.600 M7 14.800 H15.600" strokeWidth="1.9" /><path d="M6.400 6 V15.400" strokeWidth="1" /></g>,
  <g key="b"><path d="M5 8.400 L12 5.400 L19 8.400 V16 L12 19.400 L5 16 Z M5 8.400 L12 11.600 L19 8.400 M12 11.600 V19.400" strokeWidth="1.2" fill="#fff" /><path d="M.6 .8 H9.600 V8 H.6 Z M3.600 .8 V8 M6.600 .8 V8 M.6 3.200 H9.600 M.6 5.600 H9.600" fill="#8ec5ef" stroke="#1651b0" /></g>,
  <g key="c" stroke="#777"><rect x="1.4" y="1.4" width="5" height="4.6" fill="#ccc" /><path d="M4 8 V9.600 H12" stroke="#1651b0" strokeDasharray="2.4 1.6" /><path d="M15 8.600 L18.600 10 V18.400 H9 L7 16.600 V13.600 L12 12.600 L15 11 Z M12 12.600 L14 15 L18.600 10 M14 15 L9 18.400" /></g>,
  <g key="d"><path d="M14 18 H1.400 V11.400 H14" strokeWidth="1.5" /><path d="M11.400 11 V1.600 H18.600 V15" stroke="#1651b0" strokeDasharray="2 1.5" /><circle cx="15" cy="14.6" r="3.3" stroke="#1651b0" /><circle cx="15" cy="14.6" r="1.5" stroke="#888" /></g>,
  <g key="e"><path d="M.8 1 H9.400 V7.600 H.8 Z M3.600 1 V7.600 M6.400 1 V7.600 M.8 3.200 H9.400 M.8 5.400 H9.400" strokeWidth="1" fill="#999" /><path d="M2.600 7 Q-.6 12.600 2.600 18.400 M17.400 2.600 Q21 10 17.400 18.400" strokeWidth="1.7" /><path d="M6.600 7 Q9 6 9.800 9 L11 13 Q12 16 14.400 14 M14.400 6.600 Q12 6 10.600 9.600 L9 13 Q7 16.600 5.400 15" strokeWidth="1.9" /></g>,
];

function Viewport() {
  return (
    <div className="relative h-[839px] flex-1">
      {/* objects on the free 3D canvas */}
      <div className="absolute left-[524px] top-[217px]"><Model /></div>
      <div className="absolute right-0 top-[7px]"><ViewCube /></div>
      <div className="absolute left-[-1px] top-[394px] flex h-[34px] w-[33px] items-center justify-center border border-[#a5a5a5] bg-white">
        <Ic size="size-[18px]" box="0 0 18 18"><path d="M0 1 L2.600 3.600 L5.600 .6" strokeWidth="2" /><path d="M3 6 V18" stroke="#999" strokeWidth="2" /><path d="M8 1.500 H18 M5 6.500 H18 M5 11.500 H18 M5 16.500 H18" strokeWidth="1" /></Ic>
      </div>
      <div className="absolute right-0 top-[328px] flex w-8 flex-col border-l border-t border-[#a5a5a5] bg-white">
        {sideIcons.map((ic, i) => (
          <div key={i} className="flex h-[33px] items-center justify-center border-b border-[#a5a5a5]"><Ic>{ic}</Ic></div>
        ))}
      </div>
      <div className="absolute bottom-[5px] right-[12px] flex items-center gap-[18px]">
        <Ic size="size-[17px]"><circle cx="12" cy="6.4" r="4.8" /><circle cx="12" cy="6.4" r="2" /><path d="M16.800 6 V18 H2 V11.400 H9 M5 18 V15 M8 18 V15 M11 18 V15 M14 18 V15 M2 11.400 L4 9.600 H8" /></Ic>
        <Ic size="h-[17px] w-[21px]" box="0 0 22 20"><path d="M1 19 V12 Q2 2 11 2 Q20 2 21 12 V19 Z M5 15 Q5 7 11 6.600 Q17 7 17 15 Z M7.600 14 L11 9.600 L14.400 14" strokeWidth="1.3" /></Ic>
        <Ic size="size-[17px]" className="ml-[-4px]"><path d="M2 2.400 H18 M8.600 2 V17 M11.400 2 V17 M4 18.400 H16 M4 3 L1 12 H6.400 Z M16 3 L13.400 12 H19 Z" strokeWidth="1.4" /></Ic>
      </div>
    </div>
  );
}

/* ---------- document tabs ---------- */

const tabs = [
  { t: "Outter Side Plate", w: 105, k: "p" },
  { t: "Inner Side Plate", w: 98, k: "p" },
  { t: "Motor Mount Plate", w: 115, k: "p" },
  { t: "Assembly 1", w: 72, k: "a", on: true },
  { t: "Part Studio 2", w: 80, k: "p" },
  { t: "Part Studio 1", w: 80, k: "p", info: true },
  { t: "20 Teeth Pulley Copy 1", w: 142, k: "p" },
  { t: "Left Slant Mecanum W...", w: 150, k: "a" },
  { t: "Right Slant Mecanum ...", w: 146, k: "a" },
];

function Tabs() {
  return (
    <div className="flex h-[30px] min-w-0 flex-1 bg-[#d5d5d5]">
      <div className="flex w-[38px] items-center justify-center pr-[5px]"><Ic size="size-4" className="mt-[-1px]" box="0 0 16 16"><path d="M8 0 V16 M0 8 H16" stroke="#555" strokeWidth="2.2" /></Ic></div>
      <div className="flex gap-[2px] pl-[2px]">
        {tabs.map((t) => (
          <div key={t.t} className={`flex h-[27px] w-[199.8px] items-start rounded-b pl-[11px] pt-[3px] text-[15.5px] ${t.on ? "border-b-[3px] border-[#1651b0] bg-white text-[#444]" : "border-b border-[#bdbdbd] bg-[#e8e8e8] text-[#666]"}`}>
            {t.info && <svg viewBox="0 0 14 14" className="mr-[5px] mt-[3px] size-[14px] shrink-0"><circle cx="7" cy="7" r="7" fill="#6e9fd4" /><path d="M7 2.400 V11.600 M4.400 4.400 L2.600 7 L4.400 9.600 M9.600 4.400 L11.400 7 L9.600 9.600" stroke="#fff" strokeWidth="1.5" fill="none" /></svg>}
            <Ic size="size-[18px]">{t.k === "p" ? <Boxes /> : <g strokeWidth="1.3"><path d="M1.400 1.400 H15.600 L18.600 4.600 V19 H5 L1.400 15.600 Z" fill="#fff" /><path d="M5 5 H15 V14.500 H5 Z" fill="#999" stroke="#777" /><path d="M1.400 1.400 L5 5 M1.400 12 L5 14.500 V19 M15 5 L15.600 1.400" strokeWidth="1" /></g>}</Ic>
            <span className="leading-6 ml-[3px]"><Fit w={t.w}>{t.t}</Fit></span>
          </div>
        ))}
      </div>
    </div>
  );
}

/* ---------- taskbar ---------- */

const Run = () => <div className="absolute bottom-[2px] left-1/2 h-[3px] w-[6px] -translate-x-1/2 rounded-full bg-[#8f8f8f]" />;
const TaskApp = ({ children, badge }) => (
  <div className="relative flex h-10 w-11 items-center justify-center">
    {children}
    <Run />
    {badge && <div className={`absolute right-[6px] top-[3px] flex size-[14px] items-center justify-center rounded-full text-[10px] leading-none text-white ${badge === "1" ? "bg-[#d3134f]" : "bg-[#f04b4b]"}`}><Fit w={badge === "1" ? 5 : 12}>{badge}</Fit></div>}
  </div>
);

function Taskbar() {
  return (
    <div className="flex h-12 shrink-0 items-center border-b-2 border-t border-b-[#111] border-t-[#3a3a3a] bg-[#1c1c1c] pl-[11px] font-['Open_Sans',sans-serif] text-white">
      <div className="flex h-10 w-11 items-center justify-center">
        <svg viewBox="0 0 24 24" className="size-6"><defs><linearGradient id="win" x1="0" y1="0" x2="1" y2="1"><stop offset="0" stopColor="#7fdcff" /><stop offset="1" stopColor="#0a8ff0" /></linearGradient></defs><path d="M0 .5 H11.500 V11.500 H0 Z M12.500 .5 H24 V11.500 H12.500 Z M0 12.500 H11.500 V23.500 H0 Z M12.500 12.500 H24 V23.500 H12.500 Z" fill="url(#win)" /></svg>
      </div>
      <div className="flex h-10 w-11 items-center justify-center">
        <svg viewBox="0 0 24 22" className="h-[22px] w-6"><path d="M0 2 Q0 1 1.200 1 H8 L10.500 4 H24 V8 H0 Z" fill="#d99a07" /><rect y="4.5" width="24" height="16.5" rx="1" fill="#ffd04c" /><path d="M4 21 V16 Q4 14.500 5.500 14.500 H18 Q19.500 14.500 19.500 16 V21 Z" fill="#0f78c8" /><path d="M7 18 H17" stroke="#0a4f90" strokeWidth="1.5" /></svg>
      </div>
      <TaskApp>
        <svg viewBox="0 0 24 24" className="size-6"><defs><linearGradient id="msg" x1="0" y1="1" x2=".8" y2="0"><stop offset="0" stopColor="#0a84ff" /><stop offset=".5" stopColor="#a033ff" /><stop offset="1" stopColor="#ff6070" /></linearGradient></defs><path d="M12 .5 Q23.500 1 23.500 11.500 Q23 22 12 22.300 Q10 22.300 8.200 21.800 L4.500 23.500 V20 Q.5 17 .5 11.500 Q1 1 12 .5 Z" fill="url(#msg)" /><path d="M5 14.500 L9.500 9.500 L13 12.500 L18.500 9" stroke="#fff" strokeWidth="2.6" fill="none" /></svg>
      </TaskApp>
      <div className="relative ml-[2px] flex h-10 w-10 items-center justify-center rounded-[4px] border border-[#3a3a3a] bg-[#2c2c2c]">
        <svg viewBox="0 0 24 24" className="size-6"><circle cx="12" cy="12" r="12" fill="#fcc31e" /><path d="M12 12 L1.600 6 A12 12 0 0 1 22.400 6 H12 Z" fill="#e33b2e" /><path d="M12 12 L1.600 6 A12 12 0 0 0 12 24 L17.200 15 Z" fill="#2ba24c" /><path d="M12 6 H22.400 A12 12 0 0 1 12 24 L17.200 15 Z" fill="#fcc31e" /><circle cx="12" cy="12" r="5.8" fill="#fff" /><circle cx="12" cy="12" r="4.6" fill="#2b74e8" /></svg>
        <div className="absolute bottom-0 left-1/2 h-[3px] w-4 -translate-x-1/2 rounded-full bg-[#4cc2ff]" />
      </div>
      <div className="ml-[2px]"><TaskApp badge="9+">
        <svg viewBox="0 0 24 24" className="size-6"><circle cx="12" cy="12" r="12" fill="#5865f2" /><path d="M7.500 7 L10 6.400 L10.600 7.400 H13.400 L14 6.400 L16.500 7 Q19 11 19 16 Q17 17.600 15 17.800 L14.200 16.400 H9.800 L9 17.800 Q7 17.600 5 16 Q5 11 7.500 7 Z" fill="#fff" /><circle cx="9.6" cy="12.4" r="1.5" fill="#5865f2" /><circle cx="14.4" cy="12.4" r="1.5" fill="#5865f2" /></svg>
      </TaskApp></div>
      <TaskApp><svg viewBox="0 0 24 24" className="size-6"><circle cx="12" cy="12" r="12" fill="#2cb67f" /><path d="M12 12 V0 A12 12 0 0 0 0 12 Z" fill="#fff" /><circle cx="12" cy="12" r="5.6" fill="#23163a" /><circle cx="15" cy="15.5" r="1.6" fill="#fff" /></svg></TaskApp>
      <TaskApp badge="1"><svg viewBox="0 0 24 24" className="size-6"><circle cx="12" cy="12" r="12" fill="#fff" /><g strokeWidth="3" strokeLinecap="round" fill="none"><path d="M9.600 5.500 V5.600 M5.200 9.600 H9.600" stroke="#36c5f0" /><path d="M14.400 5.200 V9.600 M18.500 9.600 H18.600" stroke="#2eb67d" /><path d="M14.400 14.400 H18.800 M14.400 18.500 V18.600" stroke="#ecb22e" /><path d="M9.600 14.400 V18.800 M5.400 14.400 H5.500" stroke="#e01e5a" /></g></svg></TaskApp>
      <div className="flex-1" />
      <Ic size="size-3" box="0 0 12 12"><path d="M1.500 8 L6 3.600 L10.500 8" stroke="#fff" strokeWidth="1.3" /></Ic>
      <div className="ml-[20px] text-[11.5px]"><Fit w={24}>ENG</Fit></div>
      <Ic size="size-[18px]" className="ml-[17px]" box="0 0 18 18"><path d="M11 2.400 H2 V13 H15.500 V8 M7 13 V16 M11 13 V16 M4.500 16.400 H13" stroke="#fff" /><path d="M12.500 1.500 H16.500 V6 H12.500 Z M14.500 6 V9" stroke="#fff" /></Ic>
      <Ic size="size-[16px]" className="ml-[6px]" box="0 0 16 16"><path d="M1 5.500 H3.500 L7.500 2 V14 L3.500 10.500 H1 Z M9.500 5.600 Q11 8 9.500 10.400" stroke="#fff" /><path d="M11.500 4 Q14 8 11.500 12 M13.600 2.600 Q17 8 13.600 13.400" stroke="#777" /></Ic>
      <div className="ml-[17px] flex w-[56px] flex-col items-end text-[11.5px] leading-4"><Fit w={43}>6:20 PM</Fit><Fit w={55}>8/31/2024</Fit></div>
      <Ic size="h-4 w-[14px]" className="ml-[8px] mr-[21px]" box="0 0 14 16"><path d="M7 .5 Q11.800 1 11.800 6 V9.500 L13.500 12.500 H.5 L2.200 9.500 V6 Q2.200 1 7 .5 Z M5 13.500 H9 Q8.600 15.500 7 15.500 Q5.400 15.500 5 13.500 Z" fill="#83e4ff" stroke="none" /></Ic>
    </div>
  );
}

export default function App() {
  return (
    <div className="flex h-[1080px] w-[1920px] flex-col overflow-hidden bg-white font-['Roboto',sans-serif]">
      <Chrome />
      <Header />
      <div className="flex h-[905px] shrink-0">
        <Rail />
        <div className="flex min-w-0 flex-1 flex-col">
          <Toolbar />
          <div className="flex h-[839px] shrink-0">
            <Panel />
            <Viewport />
          </div>
          <Tabs />
        </div>
      </div>
      <Taskbar />
    </div>
  );
}
